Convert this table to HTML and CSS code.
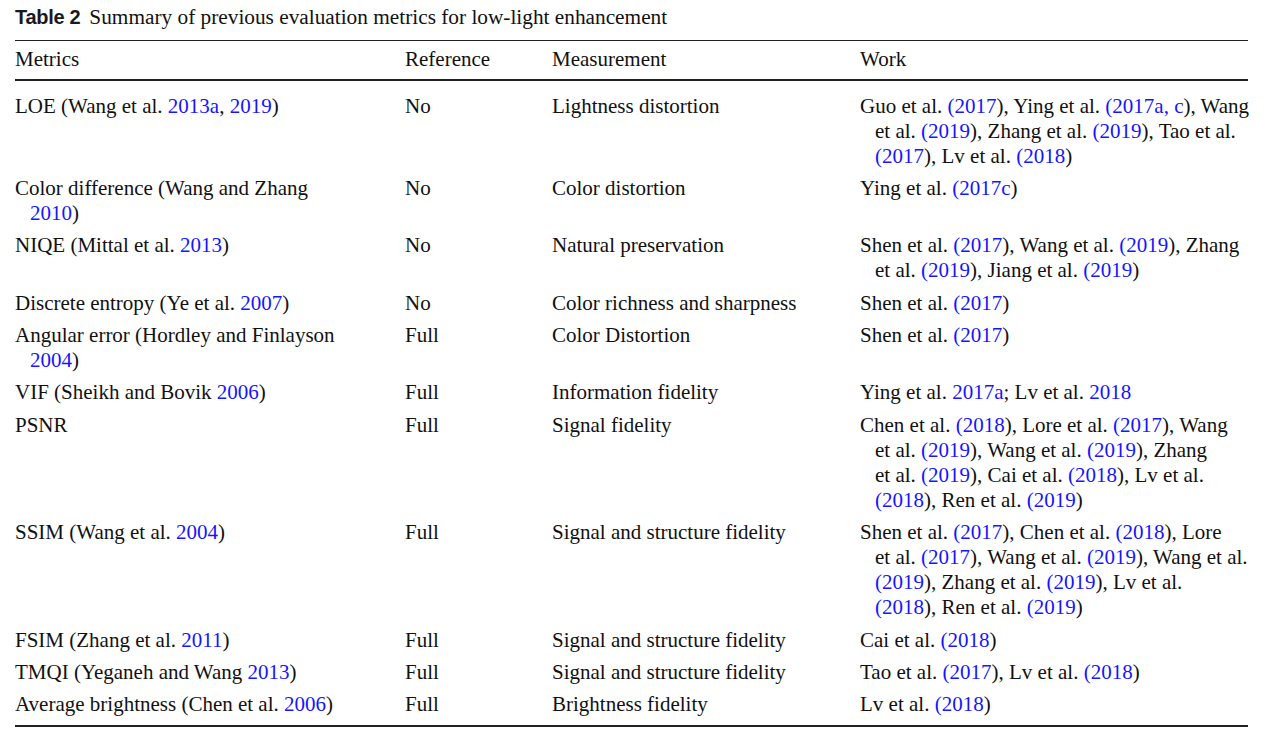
FILE: index.html
```html
<!DOCTYPE html>
<html>
<head>
<meta charset="utf-8">
<link rel="stylesheet" href="styles.css">
</head>
<body>
<div class="page">
  <div class="caption"><span class="label">Table 2</span>Summary of previous evaluation metrics for low-light enhancement</div>
  <table class="tbl">
    <colgroup>
      <col class="c1"><col class="c2"><col class="c3"><col class="c4">
    </colgroup>
    <thead>
      <tr><th>Metrics</th><th>Reference</th><th>Measurement</th><th>Work</th></tr>
    </thead>
    <tbody>
      <tr>
        <td>LOE (Wang et al. <a>2013a</a>, <a>2019</a>)</td>
        <td>No</td>
        <td>Lightness distortion</td>
        <td>Guo et al. <a>(2017</a>), Ying et al. <a>(2017a, c</a>), Wang<br>et al. <a>(2019</a>), Zhang et al. <a>(2019</a>), Tao et al.<br><a>(2017</a>), Lv et al. <a>(2018</a>)</td>
      </tr>
      <tr>
        <td>Color difference (Wang and Zhang<br><a>2010</a>)</td>
        <td>No</td>
        <td>Color distortion</td>
        <td>Ying et al. <a>(2017c</a>)</td>
      </tr>
      <tr>
        <td>NIQE (Mittal et al. <a>2013</a>)</td>
        <td>No</td>
        <td>Natural preservation</td>
        <td>Shen et al. <a>(2017</a>), Wang et al. <a>(2019</a>), Zhang<br>et al. <a>(2019</a>), Jiang et al. <a>(2019</a>)</td>
      </tr>
      <tr>
        <td>Discrete entropy (Ye et al. <a>2007</a>)</td>
        <td>No</td>
        <td>Color richness and sharpness</td>
        <td>Shen et al. <a>(2017</a>)</td>
      </tr>
      <tr>
        <td>Angular error (Hordley and Finlayson<br><a>2004</a>)</td>
        <td>Full</td>
        <td>Color Distortion</td>
        <td>Shen et al. <a>(2017</a>)</td>
      </tr>
      <tr>
        <td>VIF (Sheikh and Bovik <a>2006</a>)</td>
        <td>Full</td>
        <td>Information fidelity</td>
        <td>Ying et al. <a>2017a</a>; Lv et al. <a>2018</a></td>
      </tr>
      <tr>
        <td>PSNR</td>
        <td>Full</td>
        <td>Signal fidelity</td>
        <td>Chen et al. <a>(2018</a>), Lore et al. <a>(2017</a>), Wang<br>et al. <a>(2019</a>), Wang et al. <a>(2019</a>), Zhang<br>et al. <a>(2019</a>), Cai et al. <a>(2018</a>), Lv et al.<br><a>(2018</a>), Ren et al. <a>(2019</a>)</td>
      </tr>
      <tr>
        <td>SSIM (Wang et al. <a>2004</a>)</td>
        <td>Full</td>
        <td>Signal and structure fidelity</td>
        <td>Shen et al. <a>(2017</a>), Chen et al. <a>(2018</a>), Lore<br>et al. <a>(2017</a>), Wang et al. <a>(2019</a>), Wang et al.<br><a>(2019</a>), Zhang et al. <a>(2019</a>), Lv et al.<br><a>(2018</a>), Ren et al. <a>(2019</a>)</td>
      </tr>
      <tr>
        <td>FSIM (Zhang et al. <a>2011</a>)</td>
        <td>Full</td>
        <td>Signal and structure fidelity</td>
        <td>Cai et al. <a>(2018</a>)</td>
      </tr>
      <tr>
        <td>TMQI (Yeganeh and Wang <a>2013</a>)</td>
        <td>Full</td>
        <td>Signal and structure fidelity</td>
        <td>Tao et al. <a>(2017</a>), Lv et al. <a>(2018</a>)</td>
      </tr>
      <tr>
        <td>Average brightness (Chen et al. <a>2006</a>)</td>
        <td>Full</td>
        <td>Brightness fidelity</td>
        <td>Lv et al. <a>(2018</a>)</td>
      </tr>
    </tbody>
  </table>
</div>
</body>
</html>
```

FILE: styles.css
```css
html, body {
  margin: 0;
  padding: 0;
  background: #ffffff;
}

.page {
  padding: 5px 25px 0 15px;
  font-family: "Liberation Serif", "Times New Roman", serif;
  color: #111111;
}

.caption {
  font-size: 21.3px;
  line-height: 25px;
  margin-bottom: 10px;
  white-space: nowrap;
}

.caption .label {
  font-family: "Liberation Sans", Arial, sans-serif;
  font-weight: bold;
  font-size: 20px;
  letter-spacing: -0.3px;
  margin-right: 9px;
  color: #1a1a1a;
}

.tbl {
  width: 1233px;
  border-collapse: collapse;
  table-layout: fixed;
  font-size: 21px;
  line-height: 25px;
}

.c1 { width: 390px; }
.c2 { width: 147px; }
.c3 { width: 308px; }
.c4 { width: 388px; }

.tbl th {
  font-weight: normal;
  text-align: left;
  padding: 6px 0 7px 0;
  border-top: 1px solid #222222;
  border-bottom: 2px solid #222222;
}

.tbl td {
  vertical-align: top;
  padding: 3.5px 0 3.9px 15px;
  text-indent: -15px;
  white-space: nowrap;
}

.tbl tbody tr:first-child td {
  padding-top: 12.5px;
}

.tbl tbody tr:last-child td {
  padding-bottom: 8px;
  border-bottom: 2px solid #222222;
}

.tbl a {
  color: #1515ff;
  text-decoration: none;
}
```
